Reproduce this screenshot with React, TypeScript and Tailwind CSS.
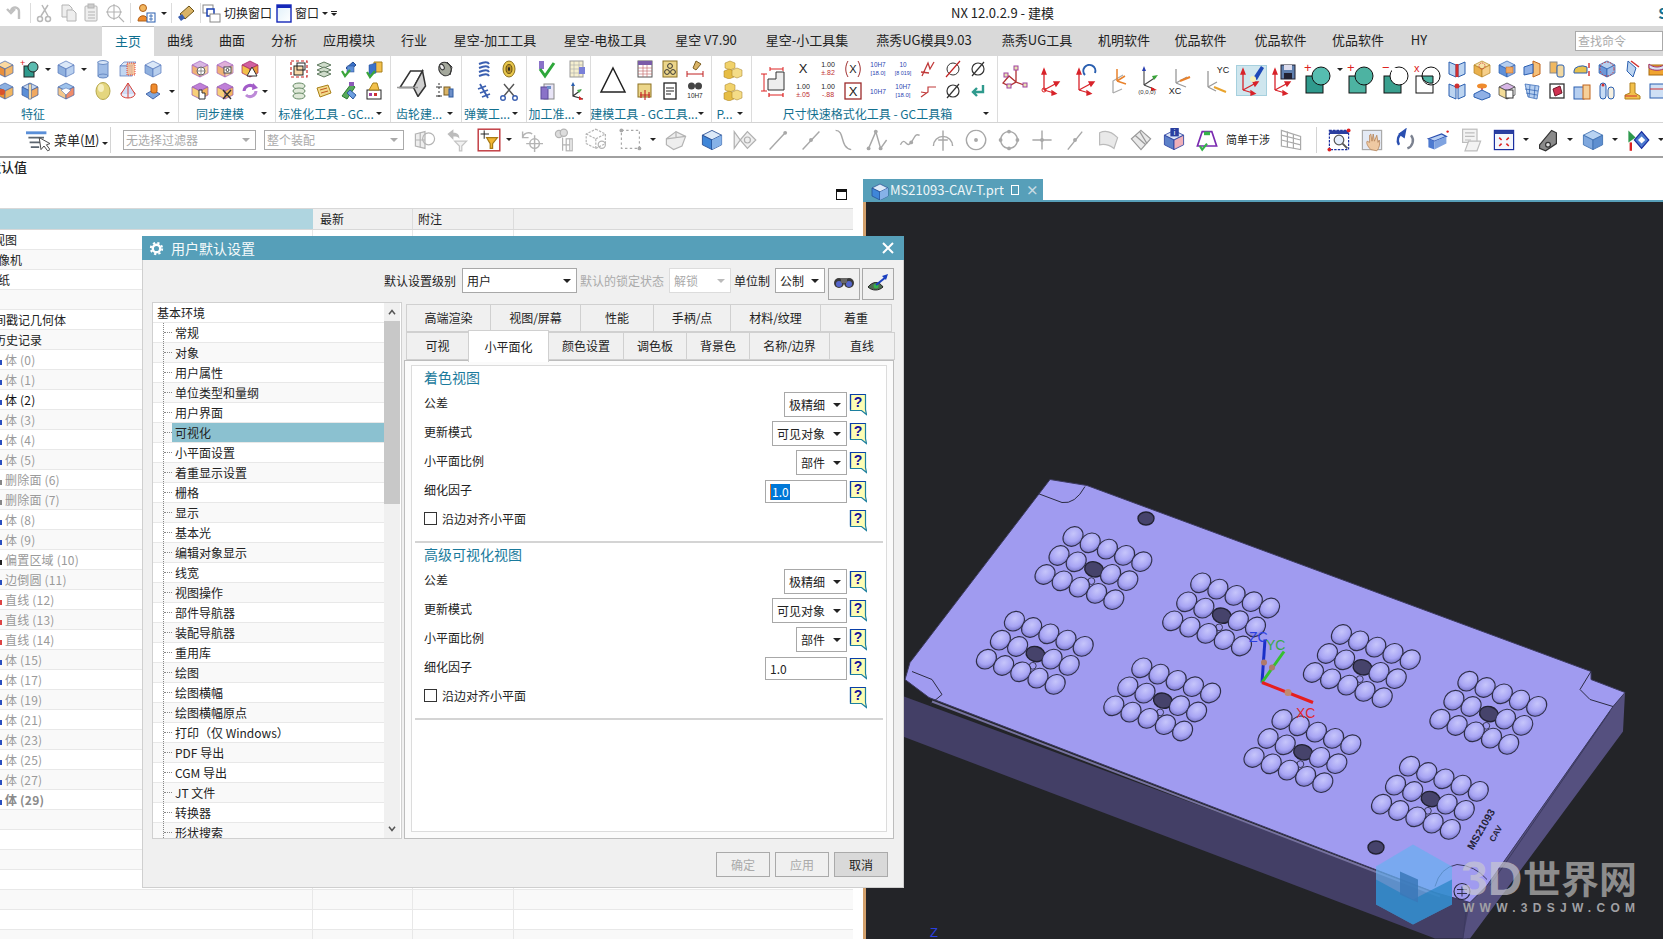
import React from "react";

const cube = (a: string, b: string, c: string, l = "#555") => (
  <g stroke={l} strokeWidth="0.7" strokeLinejoin="round">
    <polygon points="10,2 18,6 10,10 2,6" fill={a} />
    <polygon points="2,6 10,10 10,18 2,14" fill={b} />
    <polygon points="18,6 10,10 10,18 18,14" fill={c} />
  </g>
);
const csys = (extra?: React.ReactNode) => (
  <g>
    <g stroke="#d8232a" strokeWidth="1.3" fill="#d8232a">
      <line x1="6" y1="27" x2="6" y2="9" />
      <line x1="6" y1="27" x2="19" y2="20" />
      <line x1="6" y1="27" x2="16" y2="30" />
      <polygon points="6,6 4,11 8,11" />
      <polygon points="21,19 16,19 18,23" />
      <polygon points="18,30.5 14,28 14,32" />
    </g>
    {extra}
  </g>
);
const txt = (x: number, y: number, s: string, c = "#222", f = 6) => (
  <text x={x} y={y} fontSize={f} fill={c} textAnchor="middle" fontFamily="Liberation Sans, sans-serif">
    {s}
  </text>
);
const spring = (c: string) => (
  <g fill="none" stroke={c} strokeWidth="2">
    <path d="M5 5c5-2 9-2 10 0M5 9c5-2 9-2 10 0M5 13c5-2 9-2 10 0M5 17c5-2 9-2 10 0" />
  </g>
);
const gray = (d: string) => <path d={d} fill="none" stroke="#a8a8a8" strokeWidth="1.2" />;
const dot = (x: number, y: number, c = "#a8a8a8", r = 1.6) => <circle cx={x} cy={y} r={r} fill={c} />;

const art: Record<string, React.ReactNode> = {
  co: cube("#fbd9a0", "#e88f3c", "#f3b566", "#4466aa"),
  cb: cube("#dbe8f8", "#8fb0de", "#b8cfee", "#5577bb"),
  cg: cube("#eeeeee", "#c8c8c8", "#dddddd", "#aaaaaa"),
  tp: (
    <>
      <text x="0" y="7" fontSize="9" fill="#d22" fontFamily="Liberation Sans">+</text>
      <rect x="4" y="7" width="10" height="11" fill="#2f9a8d" stroke="#222" />
      <circle cx="13" cy="8" r="5" fill="#5bbcb0" stroke="#222" />
    </>
  ),
  cyl: (
    <>
      <rect x="5" y="3" width="10" height="14" fill="#9fbce6" stroke="#6a8cc4" />
      <ellipse cx="10" cy="3.5" rx="5" ry="2" fill="#d6e4f7" stroke="#6a8cc4" />
      <ellipse cx="10" cy="17" rx="5" ry="2" fill="#9fbce6" stroke="#6a8cc4" />
    </>
  ),
  boxr: (
    <>
      <polygon points="2,7 6,3 18,3 14,7" fill="#dce8f6" stroke="#5577bb" strokeWidth=".7" />
      <rect x="2" y="7" width="12" height="10" fill="#c2d6f0" stroke="#5577bb" strokeWidth=".7" />
      <rect x="9" y="4" width="8" height="12" fill="#f6b98a" fillOpacity=".8" stroke="#d22" strokeDasharray="1 1" strokeWidth=".8" />
    </>
  ),
  burst: (
    <>
      {cube("#8cb0e0", "#e9912f", "#f2b65f", "#4466aa")}
      <circle cx="7" cy="11" r="3" fill="#d9532c" />
    </>
  ),
  slice: (
    <>
      {cube("#c4d6f0", "#5c8fd6", "#f0a860", "#335599")}
      <rect x="8.5" y="3" width="3" height="15" fill="#f6d9a0" stroke="#335599" strokeWidth=".5" />
    </>
  ),
  open: (
    <>
      {cube("#9fc3ec", "#f4c88c", "#f08c6a", "#4466aa")}
      <polygon points="10,7 15,9 10,14 5,9" fill="#fff" stroke="#4466aa" strokeWidth=".5" />
    </>
  ),
  ball: (
    <>
      <ellipse cx="10" cy="10" rx="7" ry="8.5" fill="#e4d67e" stroke="#b7a84c" />
      <ellipse cx="8" cy="7" rx="3" ry="4" fill="#f6efc0" />
    </>
  ),
  cone: (
    <>
      <ellipse cx="10" cy="13" rx="7" ry="4" fill="#e8eefb" stroke="#d6433a" />
      <path d="M3 13 10 2 17 13" fill="#cfdcf5" stroke="#d6433a" />
      <line x1="10" y1="2" x2="10" y2="17" stroke="#d6433a" />
    </>
  ),
  stamp: (
    <>
      <polygon points="3,13 10,9 17,13 10,18" fill="#7fa6de" stroke="#4466aa" />
      <rect x="8" y="3" width="6" height="9" rx="2" fill="#ef8b2c" stroke="#b95d10" />
    </>
  ),
  hx: (
    <>
      {cube("#d8b6e2", "#f0b276", "#f6cf9a", "#a060c0")}
      <circle cx="11" cy="12" r="4" fill="#fff" stroke="#666" />
      <path d="M7 12h8M11 8v8" stroke="#666" strokeWidth=".7" />
    </>
  ),
  hx2: (
    <>
      {cube("#e0b0d8", "#f0b276", "#f6cf9a", "#a060c0")}
      <rect x="9" y="8" width="7" height="6" fill="#fff" stroke="#444" />
      <circle cx="12.5" cy="11" r="1.5" fill="none" stroke="#444" />
    </>
  ),
  hx3: (
    <>
      {cube("#d060a0", "#f2c04a", "#e89a3a", "#a02060")}
      <polygon points="12,8 17,17 7,17" fill="#fff" stroke="#333" />
    </>
  ),
  hx4: (
    <>
      {cube("#c080d8", "#f7cf7a", "#f2b65f", "#9050b0")}
      <path d="M9 9v9h6v-6h-3V9z" fill="#fff" stroke="#333" />
    </>
  ),
  hx5: (
    <>
      {cube("#c080d8", "#f7cf7a", "#f2b65f", "#9050b0")}
      <path d="M8 9l8 9M16 9l-8 9" stroke="#333" strokeWidth="1.4" />
    </>
  ),
  rot: (
    <g fill="none" stroke="#a25cc8" strokeWidth="3">
      <path d="M4 10a6 6 0 0 1 10-4" />
      <path d="M16 10a6 6 0 0 1-10 4" stroke="#bd8ad8" />
      <polygon points="13,2 18,7 12,9" fill="#a25cc8" stroke="none" />
    </g>
  ),
  fr: (
    <>
      <rect x="2" y="2" width="16" height="16" fill="none" stroke="#cc2222" strokeWidth="1.2" strokeDasharray="3 2" />
      <rect x="5" y="7" width="9" height="9" fill="#f7d7a8" stroke="#222" />
      <rect x="8" y="4" width="8" height="7" fill="none" stroke="#222" />
    </>
  ),
  stk: (
    <g stroke="#668a66" fill="#dfe8d8">
      <ellipse cx="10" cy="5" rx="6" ry="3" />
      <ellipse cx="10" cy="10" rx="6" ry="3" />
      <ellipse cx="10" cy="15" rx="6" ry="3" />
    </g>
  ),
  bar: (
    <>
      <polygon points="7,9 14,3 17,6 10,12" fill="#3b72c9" stroke="#234a90" />
      <rect x="8" y="7" width="7" height="6" fill="#5f8fd8" stroke="#234a90" strokeWidth=".5" />
      <path d="M3 12l3 5 5-6" fill="none" stroke="#3aa53a" strokeWidth="2.2" />
    </>
  ),
  by: (
    <>
      <polygon points="10,3 18,3 18,13 10,13" fill="#f3c04d" stroke="#a98018" />
      <polygon points="5,6 12,4 12,14 5,16" fill="#3b72c9" stroke="#234a90" strokeWidth=".5" />
      <path d="M3 13l3 5 5-6" fill="none" stroke="#3aa53a" strokeWidth="2.2" />
    </>
  ),
  stk2: (
    <g stroke="#5f7a5f" fill="#cfdccb">
      <polygon points="3,6 10,3 17,6 10,9" />
      <polygon points="3,11 10,8 17,11 10,14" />
      <polygon points="3,15 10,12 17,15 10,18" />
    </g>
  ),
  note: (
    <>
      <polygon points="3,7 14,4 17,12 6,16" fill="#f3d98a" stroke="#a98018" />
      <path d="M6 9l7-2M7 12l7-2" stroke="#c05a20" />
    </>
  ),
  tool: (
    <>
      <polygon points="3,15 12,3 16,6 8,18" fill="#58a95c" stroke="#2a7a30" />
      <polygon points="11,9 17,14 14,18 8,12" fill="#6d9fe0" stroke="#2e5aa0" />
      <rect x="10" y="1" width="5" height="4" fill="#8c5ab8" />
    </>
  ),
  chart: (
    <>
      <rect x="3" y="9" width="14" height="9" fill="#fff" stroke="#222" />
      <rect x="5" y="12" width="3" height="3" fill="#a040a0" />
      <rect x="10" y="12" width="3" height="3" fill="#d03030" />
      <polygon points="5,9 9,2 13,2 15,9" fill="#f2c04a" stroke="#a98018" />
    </>
  ),
  ang: (
    <>
      <polygon points="2,15 9,4 17,4 11,15" fill="#fff" stroke="#333" />
      <polygon points="11,15 17,4 19,14 14,21" fill="#d0d0d0" stroke="#333" />
      <line x1="0" y1="15" x2="14" y2="15" stroke="#999" />
    </>
  ),
  roll: (
    <>
      <ellipse cx="10" cy="10" rx="6" ry="7" fill="#a4a89c" stroke="#333" transform="rotate(-30 10 10)" />
      <ellipse cx="7" cy="8" rx="2" ry="3" fill="#eee" stroke="#333" transform="rotate(-30 7 8)" />
      <path d="M12 3l5 5-2 8" fill="none" stroke="#333" />
    </>
  ),
  line: (
    <>
      <path d="M4 2v16" stroke="#333" strokeDasharray="2 2" />
      <path d="M1 6h6M1 15h6" stroke="#333" />
      <rect x="9" y="6" width="6" height="8" fill="#d9b366" stroke="#7b5e22" />
      <rect x="14" y="8" width="4" height="8" fill="#6d8fc8" stroke="#2e5aa0" />
    </>
  ),
  spr: spring("#3a5fb0"),
  ryl: (
    <>
      <ellipse cx="10" cy="10" rx="6" ry="8" fill="#e9c84c" stroke="#8c7120" />
      <ellipse cx="10" cy="10" rx="3" ry="4.5" fill="#b8912a" stroke="#6b5316" />
      <ellipse cx="10" cy="10" rx="1" ry="2" fill="#222" />
    </>
  ),
  spr2: <path d="M6 3l8 14M4 8l8-3M6 12l8-3M8 16l8-3" stroke="#3a5fb0" strokeWidth="1.8" fill="none" />,
  sci: (
    <g fill="none" stroke="#555" strokeWidth="1.4">
      <path d="M5 3l10 12M15 3L5 15" />
      <circle cx="4" cy="17" r="2.3" stroke="#3a5fb0" />
      <circle cx="16" cy="17" r="2.3" stroke="#3a5fb0" />
    </g>
  ),
  chk: (
    <>
      <rect x="2" y="2" width="5" height="8" fill="#8a72c8" />
      <path d="M3 10l5 7 9-13" fill="none" stroke="#2da73a" strokeWidth="3" />
    </>
  ),
  grd: (
    <>
      <rect x="3" y="2" width="13" height="16" fill="#f6efcf" stroke="#999" />
      <path d="M3 6h13M3 10h13M3 14h13M7 2v16M12 2v16" stroke="#aaa" strokeWidth=".6" />
      <rect x="12" y="8" width="6" height="7" fill="#7a80d8" />
    </>
  ),
  doc: (
    <>
      <rect x="7" y="3" width="10" height="15" fill="#e8e4f6" stroke="#888" />
      <rect x="4" y="6" width="7" height="12" fill="#8a72c8" stroke="#5a4a98" />
      <rect x="10" y="5" width="4" height="3" fill="#6d8fc8" />
    </>
  ),
  cs2: (
    <>
      <path d="M6 3v12l10 3M6 15l8-6" fill="none" stroke="#333" strokeWidth="1.2" />
      <polygon points="6,1 4,5 8,5" fill="#2a5fb0" />
      <polygon points="16,18.5 12,15 12,19" fill="#d22" />
      <polygon points="15,8 10,9 12,12" fill="#4caf50" />
    </>
  ),
  tri: <polygon points="10,2 18,18 2,18" fill="#fff" stroke="#222" strokeWidth="1" />,
  tbl: (
    <>
      <rect x="3" y="2" width="14" height="16" fill="#fff" stroke="#555" />
      <rect x="3" y="2" width="14" height="4" fill="#7a5ca8" />
      <path d="M3 9h14M3 12h14M3 15h14M8 6v12M12 6v12" stroke="#c06060" strokeWidth=".6" />
    </>
  ),
  yc: (
    <>
      <rect x="3" y="2" width="14" height="16" fill="#ecd68a" stroke="#8c7120" />
      <circle cx="7" cy="13" r="2.4" fill="none" stroke="#333" />
      <circle cx="13" cy="13" r="2.4" fill="none" stroke="#333" />
      <circle cx="10" cy="7" r="2.4" fill="none" stroke="#333" />
    </>
  ),
  brush: (
    <>
      <polygon points="11,2 16,5 11,11 8,9" fill="#d9b366" stroke="#7b5e22" />
      <path d="M2 15h16M2 12v6M18 12v6" stroke="#c02020" />
    </>
  ),
  yplus: (
    <>
      <rect x="3" y="3" width="13" height="13" fill="#ecd68a" stroke="#8c7120" />
      <path d="M10 9v10M5 14h10M6 11v6M14 11v6" stroke="#c02020" strokeWidth="1.1" />
    </>
  ),
  lines: (
    <>
      <rect x="4" y="2" width="12" height="16" fill="#fff" stroke="#222" strokeWidth="1.3" />
      <path d="M6 7h8M6 10h8M6 13h5" stroke="#222" />
    </>
  ),
  h7: (
    <>
      <circle cx="6.5" cy="5" r="3.5" fill="#444" />
      <circle cx="13.5" cy="5" r="3.5" fill="#444" />
      {txt(10, 17, "10H7", "#222", 6.4)}
    </>
  ),
  yb: (
    <g stroke="#a07a20" strokeWidth=".5">
      <polygon points="7,2 12,4 12,9 7,11 2,9 2,4" fill="#f1d26b" />
      <polygon points="6,10 11,12 11,18 6,20 1,18 1,12" fill="#e6bd45" />
      <polygon points="14,9 19,11 19,17 14,19 9,17 9,11" fill="#f4dc87" />
    </g>
  ),
  dim: (
    <svg viewBox="0 0 30 34">
      <path d="M8 27V16h8V9h8v18z" fill="#eee" stroke="#333" />
      <path d="M4 11v17M1 11h6M1 28h6M10 6h13M10 4v4M23 4v4" stroke="#d22" fill="none" />
      <path d="M9 32h14M9 30v4M23 30v4" stroke="#d22" strokeWidth="1.2" />
    </svg>
  ),
  x1: <>{txt(10, 14, "X", "#222", 13)}</>,
  d1: (
    <>
      {txt(10, 8, "1.00", "#222", 7)}
      {txt(10, 16, "-.88", "#c03030", 7)}
    </>
  ),
  d2: (
    <>
      {txt(10, 8, "1.00", "#222", 7)}
      {txt(10, 16, "±.05", "#c03030", 7)}
    </>
  ),
  d3: (
    <>
      {txt(10, 8, "1.00", "#222", 7)}
      {txt(10, 16, "±.82", "#c03030", 7)}
    </>
  ),
  xb: (
    <>
      <rect x="2" y="2" width="16" height="16" fill="#fff" stroke="#9c2a2a" strokeWidth="1.3" />
      {txt(10, 15, "X", "#222", 13)}
    </>
  ),
  xp: (
    <>
      <path d="M5 2c-3 5-3 11 0 16M15 2c3 5 3 11 0 16" fill="none" stroke="#a03030" />
      {txt(10, 14, "X", "#222", 11)}
    </>
  ),
  h71: (
    <>
      {txt(10, 8, "10H7", "#2a3fb0", 6.4)}
      {txt(10, 16, "[18.0]", "#2a3fb0", 6)}
    </>
  ),
  h72: <>{txt(10, 13, "10H7", "#2a3fb0", 6.6)}</>,
  h73: (
    <>
      {txt(10, 8, "10", "#2a3fb0", 6.4)}
      {txt(10, 16, "[8 019]", "#2a3fb0", 5.4)}
    </>
  ),
  dia: (
    <g fill="none" stroke="#333">
      <circle cx="10" cy="10" r="6" />
      <path d="M3 18L17 2" stroke="#c02020" strokeWidth="1.2" />
    </g>
  ),
  dia2: (
    <g fill="none" stroke="#333" strokeWidth="1.2">
      <circle cx="10" cy="10" r="6" />
      <path d="M4 17L16 3" />
    </g>
  ),
  sl: <path d="M4 17L10 4l2 6 4-7M3 13l8 1" fill="none" stroke="#c03a3a" strokeWidth="1.3" />,
  sl2: <path d="M3 16l7-5v-5h8M3 11l6 1" fill="none" stroke="#c03a3a" strokeWidth="1.2" />,
  ret: <path d="M15 4v7H6m3-4l-4 4 4 4" fill="none" stroke="#2f9a8d" strokeWidth="2.4" />,
  c1: (
    <svg viewBox="0 0 30 34">
      <g fill="none" stroke="#b03030" strokeWidth="1.3">
        <path d="M14 5v14l-7 4-6-3 6-7 7 6 8 3" />
      </g>
      <g fill="#e9e3b0" stroke="#a040a0" strokeWidth="1">
        <rect x="12" y="3" width="4" height="4" />
        <rect x="5" y="21" width="4" height="4" />
        <rect x="21" y="20" width="4" height="4" />
        <rect x="2" y="10" width="4" height="4" />
      </g>
    </svg>
  ),
  c2: <svg viewBox="0 0 30 34">{csys()}<circle cx="6" cy="27" r="2" fill="none" stroke="#d22" /></svg>,
  c3: (
    <svg viewBox="0 0 30 34">
      {csys(<path d="M12 12a6 6 0 1 1 10-2" fill="none" stroke="#2a5fb0" strokeWidth="2" />)}
    </svg>
  ),
  c4: (
    <svg viewBox="0 0 30 34">
      <path d="M8 30V18l10-6M8 30l9-4" fill="none" stroke="#aaa" strokeWidth="1.3" />
      <path d="M12 18V6M12 18l8-5M12 18l9 3" fill="none" stroke="#e9822c" strokeWidth="1.5" />
    </svg>
  ),
  c5: (
    <svg viewBox="0 0 30 34">
      <path d="M10 22V6M10 22l12-8M10 22l10 4" fill="none" stroke="#444" strokeWidth="1.1" />
      <polygon points="10,3 8,8 12,8" fill="#2a3fb0" />
      <polygon points="24,12 18,13 20,17" fill="#3aa53a" />
      <polygon points="23,27 17,24 17,28" fill="#d22" />
      {txt(13, 31, "(0,0,0)", "#333", 6)}
    </svg>
  ),
  c6: (
    <svg viewBox="0 0 30 34">
      <path d="M10 20V6M10 20l11-6M10 20l10 4" fill="none" stroke="#999" strokeWidth="1.3" />
      <path d="M14 18l10-4" stroke="#e9822c" strokeWidth="2" />
      {txt(9, 31, "XC", "#222", 9)}
    </svg>
  ),
  c7: (
    <svg viewBox="0 0 30 34">
      <path d="M6 24V8M6 24l9-5M6 24l8 4" fill="none" stroke="#999" strokeWidth="1.3" />
      <path d="M12 24l12 5" stroke="#e9a32c" strokeWidth="2" />
      {txt(21, 10, "YC", "#222", 9)}
    </svg>
  ),
  c8: (
    <svg viewBox="0 0 30 34">
      {csys(
        <>
          <polygon points="16,15 24,3 27,5 20,17" fill="#1f49b8" />
          <circle cx="16" cy="16" r="3" fill="#f6f0b8" />
        </>,
      )}
    </svg>
  ),
  c9: (
    <svg viewBox="0 0 30 34">
      {csys(
        <>
          <rect x="12" y="2" width="14" height="14" fill="#5f7fae" stroke="#223" />
          <rect x="15" y="2" width="8" height="5" fill="#dde" />
          <rect x="15" y="10" width="8" height="6" fill="#223" />
        </>,
      )}
    </svg>
  ),
  q1: (
    <svg viewBox="0 0 30 34">
      <rect x="3" y="13" width="17" height="17" fill="#2f9a8d" stroke="#111" />
      <circle cx="18" cy="13" r="9" fill="#56bdb0" stroke="#111" />
      <text x="1" y="9" fontSize="13" fill="#d22" fontFamily="Liberation Sans">+</text>
    </svg>
  ),
  q2: (
    <svg viewBox="0 0 30 34">
      <rect x="3" y="13" width="17" height="17" fill="#4db3a2" stroke="#111" />
      <circle cx="18" cy="13" r="9" fill="#4db3a2" stroke="#111" />
      <text x="1" y="9" fontSize="13" fill="#d22" fontFamily="Liberation Sans">+</text>
    </svg>
  ),
  q3: (
    <svg viewBox="0 0 30 34">
      <rect x="3" y="13" width="17" height="17" fill="#3aa08f" stroke="#111" />
      <circle cx="18" cy="13" r="9" fill="#fff" stroke="#111" />
      <rect x="11" y="5" width="9" height="8" fill="#fff" />
      <text x="1" y="9" fontSize="13" fill="#d22" fontFamily="Liberation Sans">−</text>
    </svg>
  ),
  q4: (
    <svg viewBox="0 0 30 34">
      <rect x="3" y="13" width="17" height="17" fill="#fff" stroke="#111" />
      <circle cx="18" cy="13" r="9" fill="#fff" stroke="#111" />
      <path d="M9 13h11v7a9 9 0 0 1-11-7z" fill="#4db3a2" stroke="#111" />
      <text x="1" y="9" fontSize="11" fill="#d22" fontFamily="Liberation Sans">x</text>
    </svg>
  ),
  book: (
    <>
      <polygon points="2,3 9,6 9,18 2,15" fill="#bcd4f0" stroke="#2a5fb0" />
      <polygon points="18,3 11,6 11,18 18,15" fill="#bcd4f0" stroke="#2a5fb0" />
      <rect x="8.5" y="5" width="3" height="13" fill="#d03030" />
    </>
  ),
  y1: (
    <>
      {cube("#f6e3a8", "#e9b04c", "#f6cf8a", "#b08020")}
      <circle cx="10" cy="7" r="3" fill="none" stroke="#d03030" strokeDasharray="1 1" />
    </>
  ),
  f1: (
    <>
      {cube("#b6cff0", "#5e8fd8", "#8fb0e6", "#2a5fb0")}
      <rect x="9" y="8" width="7" height="6" fill="#f0a860" stroke="#c0641c" strokeWidth=".5" />
    </>
  ),
  f2: (
    <>
      <polygon points="11,2 18,5 18,15 11,18" fill="#f6c078" stroke="#c0641c" />
      <polygon points="2,8 11,5 11,14 2,16" fill="#8fb0e6" stroke="#2a5fb0" />
    </>
  ),
  f3: (
    <>
      <rect x="3" y="3" width="7" height="11" fill="#f0b860" stroke="#888" />
      <rect x="10" y="6" width="7" height="12" rx="2" fill="#f2d8a0" stroke="#2a5fb0" />
    </>
  ),
  f4: (
    <>
      <path d="M2 12a8 5 0 0 1 13-4v6H2z" fill="#e7c24d" stroke="#2a5fb0" />
      <path d="M17 4v5M17 12v5" stroke="#d03030" strokeWidth="1.4" />
    </>
  ),
  f5: (
    <>
      {cube("#b8cfee", "#6d97d8", "#9dbbe8", "#2a5fb0")}
      <circle cx="10" cy="10" r="7" fill="none" stroke="#d03030" strokeDasharray="1.5 1.5" />
    </>
  ),
  f6: (
    <>
      <polygon points="6,2 14,9 11,18 5,12" fill="#bcd4f0" stroke="#2a5fb0" />
      <path d="M9 2l8 6" stroke="#d03030" strokeWidth="1.5" />
    </>
  ),
  f7: (
    <>
      <rect x="2" y="6" width="16" height="10" fill="#f0a430" stroke="#a86a10" />
      <path d="M2 5c4 4 12 4 16 0v4c-4 3-12 3-16 0z" fill="#d9e2f4" stroke="#a03070" />
    </>
  ),
  g1: (
    <>
      <polygon points="2,3 9,6 9,18 2,15" fill="#bcd4f0" stroke="#2a5fb0" />
      <polygon points="18,3 11,6 11,18 18,15" fill="#bcd4f0" stroke="#2a5fb0" />
      <circle cx="10" cy="5" r="2.5" fill="#d03030" />
    </>
  ),
  g2: (
    <>
      <ellipse cx="10" cy="5" rx="5" ry="2.5" fill="#ef8b2c" />
      <path d="M10 7v5" stroke="#d03030" strokeWidth="1.3" />
      <polygon points="2,13 10,9 18,13 18,16 10,19 2,16" fill="#8fb0e6" stroke="#2a5fb0" />
    </>
  ),
  g3: (
    <>
      {cube("#d7b6e6", "#f3dc98", "#fff", "#333")}
      <rect x="9" y="9" width="7" height="8" fill="#fff" stroke="#333" />
    </>
  ),
  g4: (
    <g stroke="#2a5fb0" strokeWidth=".7">
      <polygon points="3,3 17,5 15,18 6,16" fill="#b6cff0" />
      <path d="M3 8l13 2M4 12l11 2M8 4l-1 12M13 5l-1 12" fill="none" />
    </g>
  ),
  g5: (
    <>
      <rect x="3" y="3" width="14" height="14" fill="#fff" stroke="#333" strokeWidth="1.3" />
      <polygon points="6,8 13,5 15,12 8,15" fill="#d03050" stroke="#701828" />
    </>
  ),
  g6: (
    <>
      <rect x="2" y="6" width="10" height="12" fill="#b6cff0" stroke="#2a5fb0" />
      <rect x="11" y="4" width="7" height="14" fill="#f6d09a" stroke="#c0641c" />
    </>
  ),
  g7: (
    <>
      <rect x="3" y="2" width="6" height="16" rx="3" fill="#c8dcf4" stroke="#2a5fb0" />
      <rect x="11" y="6" width="6" height="12" rx="3" fill="#f6f0e0" stroke="#2a5fb0" />
      <circle cx="6" cy="4" r="1.5" fill="#d03030" />
    </>
  ),
  g8: (
    <>
      <polygon points="8,2 13,2 13,12 18,15 18,18 3,18 3,14 8,12" fill="#f2c04a" stroke="#b08020" />
      <path d="M3 15h12" stroke="#d03030" />
    </>
  ),
  g9: (
    <>
      <rect x="3" y="3" width="14" height="14" fill="#cfe0f5" stroke="#2a5fb0" />
      <path d="M3 8h14" stroke="#d03030" />
    </>
  ),
  undo: <path d="M15 16V9a4 4 0 0 0-8-1M3 6l4 4 4-4" fill="none" stroke="#c0c0c0" strokeWidth="2.4" />,
  scis: (
    <g fill="none" stroke="#b8b8b8" strokeWidth="1.5">
      <path d="M14 2L7 13M8 2l6 11" />
      <circle cx="6" cy="16" r="2.5" />
      <circle cx="14" cy="16" r="2.5" />
    </g>
  ),
  copy: (
    <g fill="#eee" stroke="#b4b4b4">
      <path d="M3 2h7l3 3v9H3z" />
      <path d="M8 7h6l3 3v8H8z" />
    </g>
  ),
  paste: (
    <g fill="#eee" stroke="#b4b4b4">
      <rect x="3" y="3" width="12" height="15" rx="1" />
      <rect x="6" y="1" width="6" height="4" fill="#ccc" />
      <path d="M6 9h7M6 12h7M6 15h7" />
    </g>
  ),
  gl: (
    <g fill="none" stroke="#b4b4b4" strokeWidth="1.1">
      <circle cx="9" cy="9" r="6.5" />
      <path d="M9 1v16M1 9h16M14 14l5 5" />
    </g>
  ),
  per: (
    <>
      <circle cx="7" cy="5" r="3.5" fill="#f2b65f" stroke="#b06018" />
      <path d="M2 18c0-7 10-7 10 0z" fill="#ef8b2c" stroke="#b06018" />
      <rect x="11" y="10" width="8" height="9" fill="#fff" stroke="#2a5fb0" />
      <path d="M13 13h4M13 16h4M15 11v7" stroke="#2a5fb0" strokeWidth=".8" />
    </>
  ),
  pen: (
    <>
      <polygon points="4,11 13,3 18,8 9,16" fill="#d9b366" stroke="#6b5316" />
      <polygon points="2,14 6,11 9,15 5,18" fill="#3a5fb0" />
    </>
  ),
  win: (
    <>
      <rect x="1" y="2" width="10" height="8" fill="#fff" stroke="#888" />
      <rect x="5" y="6" width="7" height="7" fill="#fff" stroke="#1a3fb0" strokeWidth="1.5" />
      <rect x="8" y="11" width="10" height="8" fill="#fff" stroke="#888" />
    </>
  ),
  win2: (
    <>
      <defs>
        <linearGradient id="wg" x1="0" x2="1" y1="0" y2="1">
          <stop offset="0" stopColor="#dff0fa" />
          <stop offset="1" stopColor="#fff" />
        </linearGradient>
      </defs>
      <rect x="3" y="2" width="14" height="17" fill="url(#wg)" stroke="#1427b8" strokeWidth="1.4" />
      <rect x="3" y="2" width="14" height="3" fill="#1427b8" />
    </>
  ),
  menu: (
    <>
      <path d="M0 4h17" stroke="#5a8fd8" strokeWidth="2.4" />
      <path d="M2 8h13M3 12h9M4 16h7" stroke="#5c6670" strokeWidth="1.4" />
      <path d="M11 8l1.5 10 2.5-3 3 4 2-1-3-4 3-1z" fill="#fff" stroke="#444" strokeWidth=".8" />
    </>
  ),
  s1: (
    <g fill="#eee" stroke="#b4b4b4">
      <polygon points="2,5 10,3 10,17 2,15" />
      <circle cx="13" cy="9" r="5" fill="none" />
      <path d="M2 10h8M6 4v12" />
    </g>
  ),
  s2: (
    <>
      <path d="M2 5l5-4v3c4 0 5 2 5 5-1-2-3-2-5-2v3z" fill="#bcbcbc" />
      <polygon points="8,11 18,11 14,15 14,19 12,19 12,15" fill="#f1f1f1" stroke="#c4c4c4" />
    </>
  ),
  s3: (
    <>
      <rect x="1" y="1" width="18" height="18" fill="#fff" stroke="#c0393f" strokeWidth="1.2" />
      <polygon points="8,8 17,8 13,13 13,17 11,17 11,13" fill="#f2b632" stroke="#a87a14" />
      <path d="M6 2v7M3 5h7" stroke="#222" strokeWidth=".8" />
    </>
  ),
  s4: (
    <g fill="none" stroke="#b4b4b4" strokeWidth="1.2">
      <path d="M3 8a5 5 0 0 1 8-3M3 3v5h5" />
      <circle cx="13" cy="13" r="4" />
      <path d="M13 6v14M6 13h14" />
    </g>
  ),
  s5: (
    <g stroke="#b4b4b4" fill="#ddd">
      <circle cx="5" cy="5" r="3" />
      <circle cx="9" cy="4" r="3" />
      <path d="M8 8v11M14 9v10M8 14h6" fill="none" />
      <rect x="11" y="9" width="5" height="10" fill="none" />
    </g>
  ),
  s6: (
    <g fill="none" stroke="#b4b4b4" strokeDasharray="2 1">
      <polygon points="9,1 17,5 17,13 9,17 1,13 1,5" />
      <path d="M9 9v8M1 5l8 4 8-4" />
      <circle cx="14" cy="14" r="3" strokeDasharray="none" />
    </g>
  ),
  s7: (
    <>
      <rect x="2" y="2" width="15" height="15" fill="none" stroke="#a8a8a8" strokeDasharray="2 2" />
      <circle cx="17" cy="17" r="1.6" fill="#a8a8a8" />
      <circle cx="2" cy="2" r="1.6" fill="#a8a8a8" />
    </>
  ),
  s8: (
    <>
      <polygon points="2,9 10,3 18,7 15,15 8,18 2,14" fill="#eeeeee" stroke="#b4b4b4" />
      <path d="M10 3v5l8-1M10 8l-8 1" stroke="#b4b4b4" fill="none" />
    </>
  ),
  s9: <>{cube("#dce9f8", "#3f86d8", "#a9c9ef", "#234a90")}<polygon points="10,10 18,6 18,14 10,18" fill="#86b2e8" /></>,
  s10: (
    <g fill="none" stroke="#b0b0b0">
      <path d="M1 3l5 7-5 7zM6 10l6-7 7 7-7 7z" fill="#eee" />
      <circle cx="12" cy="10" r="2.5" />
    </g>
  ),
  s11: <>{gray("M3 18L16 4")}{dot(16, 4)}</>,
  s12: <>{gray("M3 18L17 3")}{dot(10, 10)}</>,
  s13: gray("M3 2c8 0 3 14 13 16"),
  s14: (
    <>
      {gray("M3 17L9 3l4 14 5-7")}
      {dot(9, 3)}
      {dot(3, 17)}
      {dot(13, 17)}
    </>
  ),
  s15: (
    <>
      {gray("M2 14c4-8 5 4 9-2s3-7 7-6")}
      {dot(11, 12)}
    </>
  ),
  s16: <>{gray("M2 15a8 8 0 0 1 16 0M10 2v17M6 10h8")}</>,
  s17: (
    <>
      {gray("M10 2a8 8 0 1 0 .1 0")}
      {dot(10, 10)}
    </>
  ),
  s18: (
    <>
      {gray("M10 3a7 7 0 1 0 .1 0")}
      {dot(10, 3)}
      {dot(3, 10)}
      {dot(17, 10)}
      {dot(10, 17)}
    </>
  ),
  s19: <>{gray("M10 2v16M2 10h16")}{dot(10, 10)}</>,
  s20: <>{gray("M4 18L16 3")}{dot(10, 10)}</>,
  s21: <path d="M3 4c6-3 11 0 15 4l-3 9c-4-3-7-4-12-3z" fill="#e9e9e9" stroke="#bbb" />,
  s22: (
    <g stroke="#999" fill="#e9e9e9">
      <polygon points="10,2 18,9 10,18 2,9" />
      <path d="M5 6l9 8M9 3l6 10" fill="none" />
    </g>
  ),
  s23: (
    <>
      {cube("#dce4f5", "#5c80c8", "#f0b0b8", "#2a3fa0")}
      <rect x="7" y="0" width="7" height="7" fill="#2a3fa0" />
      <text x="10.5" y="6" fontSize="6" fill="#fff" textAnchor="middle">i</text>
    </>
  ),
  s24: (
    <>
      <polygon points="6,3 14,3 18,15 2,15" fill="#fff" stroke="#7a2ab0" strokeWidth="1.4" />
      <rect x="7.5" y="3" width="5" height="3" fill="#36b24a" />
      <path d="M4 15l2 3 4-5" stroke="#36b24a" strokeWidth="1.8" fill="none" />
    </>
  ),
  s25: (
    <g stroke="#aaa" fill="none">
      <polygon points="2,2 18,7 18,18 2,15" />
      <path d="M2 6l16 4M2 10l16 4M7 3v13M12 5v12" />
    </g>
  ),
  t1: (
    <>
      <rect x="2" y="2" width="16" height="16" fill="#fff" stroke="#1a2fa0" strokeDasharray="2 1" />
      <rect x="2" y="2" width="16" height="3" fill="#2a3fa0" />
      <circle cx="10" cy="10" r="4" fill="#e5eefb" stroke="#555" />
      <path d="M13 13l4 4" stroke="#555" strokeWidth="1.6" />
      {dot(2, 18, "#d22")}
      {dot(18, 2, "#d22")}
    </>
  ),
  t2: (
    <>
      <rect x="2" y="2" width="16" height="16" fill="#e4eaf5" stroke="#aaa" />
      <path d="M9 18c-3-3-4-6-3-7l2 1V6l1-1 1 6 1-6 1 6 2-5 1 6 1-2c1 3 0 7-2 9z" fill="#efc9a2" stroke="#b07a4c" strokeWidth=".6" />
    </>
  ),
  t3: (
    <g fill="none" stroke="#2a4fb0" strokeWidth="2">
      <path d="M5 14a7 7 0 0 1 3-10" />
      <path d="M15 6a7 7 0 0 1-3 11" stroke="#7c8290" />
      <polygon points="10,2 6,5 9,7" fill="#2a4fb0" />
    </g>
  ),
  t4: (
    <>
      <polygon points="2,9 13,5 17,7 7,11" fill="#b8cff2" stroke="#2a4fb0" />
      <polygon points="2,9 7,11 7,18 2,16" fill="#4d7ad0" />
      <polygon points="7,11 17,7 17,13 7,18" fill="#7fa3e0" />
      {dot(18, 3, "#d22", 1)}
    </>
  ),
  t5: (
    <g fill="#f3f3f3" stroke="#bdbdbd">
      <rect x="3" y="1" width="12" height="11" />
      <path d="M5 4h8M5 7h8M5 10h5" />
      <polygon points="8,11 18,11 15,19 5,19" />
    </g>
  ),
  t6: (
    <>
      <rect x="2" y="2" width="16" height="16" fill="#f4f7fc" stroke="#1a2fa0" />
      <rect x="2" y="2" width="16" height="3" fill="#2a3fa0" />
      <path d="M6 8l2 2M14 8l-2 2M6 15l2-2M14 15l-2-2" stroke="#d22" strokeWidth="1.3" />
    </>
  ),
  t7: (
    <>
      <polygon points="3,14 13,2 17,4 17,13 8,19 3,17" fill="#8a8a8a" stroke="#333" />
      <circle cx="10" cy="14" r="2" fill="#ddd" stroke="#333" />
    </>
  ),
  t8: <>{cube("#b8d3f2", "#7fa8de", "#5e8fd0", "#3d6fb0")}</>,
  t9: (
    <>
      <polygon points="2,2 8,8 2,12" fill="#2f9a4e" />
      <path d="M4 12v7" stroke="#d22" strokeWidth="2" />
      <polygon points="13,3 19,10 13,17 7,10" fill="#4d7ad0" stroke="#1a2fa0" />
      <polygon points="13,7 16,10 13,13 10,10" fill="#fff" />
    </>
  ),
};

const Ic = ({ k, big, lg }: { k: string; big?: boolean; lg?: boolean }) => (
  <svg
    viewBox="0 0 20 20"
    className={big ? "w-[30px] h-[34px] shrink-0" : lg ? "w-[24px] h-[24px] shrink-0" : "w-[20px] h-[20px] shrink-0"}
  >
    {art[k]}
  </svg>
);
const Tall = ({ k }: { k: string }) => <span className="block w-[30px] h-[34px] shrink-0">{art[k]}</span>;

const Tri = ({ c = "border-t-[#222]" }: { c?: string }) => (
  <span className={`inline-block w-0 h-0 border-x-[3px] border-t-[3px] border-x-transparent shrink-0 ${c}`} />
);

const Col = ({ w, i }: { w: string; i: string[] }) => (
  <div className={`${w} shrink-0 flex flex-col items-center`}>
    {i.map((k, n) =>
      k === "" ? (
        <div key={n} className="h-[22px]" />
      ) : k === "^" ? (
        <div key={n} className="h-[22px] flex items-center"><Tri /></div>
      ) : (
        <div key={n} className="h-[22px] flex items-center justify-center"><Ic k={k} /></div>
      ),
    )}
  </div>
);
const TallCol = ({ w, k }: { w: string; k: string }) => (
  <div className={`${w} shrink-0 flex items-center justify-center h-[44px]`}><Tall k={k} /></div>
);
const BigCol = ({ w, k }: { w: string; k: string }) => (
  <div className={`${w} shrink-0 flex items-center justify-center h-[44px]`}><Ic k={k} big /></div>
);

const Group = ({ w, pl, label, children, last, left }: { w: string; pl?: string; label?: string; children: React.ReactNode; last?: boolean; left?: string }) => (
  <div className={`${w} shrink-0 flex flex-col pt-[2px] ${last ? "" : "border-r border-[#dcdcdc]"}`}>
    <div className={`h-[44px] flex ${pl ?? ""}`}>{children}</div>
    {label !== undefined && (
      <div className="mt-[3px] h-[17px] flex items-center justify-center relative text-[12px] text-[#12708f] whitespace-nowrap pr-[8px]">
        <span className={`flex-1 leading-none ${left ?? "text-center"}`}>{label}</span>
        <Tri />
      </div>
    )}
  </div>
);

const tabs: [string, string][] = [
  ["主页", "w-[52px]"], ["曲线", "w-[52px]"], ["曲面", "w-[52px]"], ["分析", "w-[52px]"], ["应用模块", "w-[78px]"], ["行业", "w-[52px]"],
  ["星空-加工工具", "w-[110px]"], ["星空-电极工具", "w-[110px]"], ["星空 V7.90", "w-[92px]"], ["星空-小工具集", "w-[110px]"],
  ["燕秀UG模具9.03", "w-[124px]"], ["燕秀UG工具", "w-[102px]"], ["机明软件", "w-[72px]"], ["优品软件", "w-[81px]"], ["优品软件", "w-[79px]"], ["优品软件", "w-[76px]"], ["HY", "w-[46px]"],
];

const leftRows: [string, string, string][] = [
  ["模型视图", "-ml-[31px] text-[#222]", ""],
  ["摄像机", "-ml-[14px] text-[#222]", ""],
  ["图纸", "-ml-[14px] text-[#222]", ""],
  ["", "", ""],
  ["时间戳记几何体", "-ml-[18px] text-[#222]", ""],
  ["历史记录", "-ml-[6px] text-[#222]", ""],
  ["体 (0)", "ml-[3px] text-[#9a9a9a] tracking-[0.2px]", "bg-[#2a4fc0]"],
  ["体 (1)", "ml-[3px] text-[#9a9a9a] tracking-[0.2px]", "bg-[#2a4fc0]"],
  ["体 (2)", "ml-[3px] text-[#111] tracking-[0.2px]", "bg-[#2a4fc0]"],
  ["体 (3)", "ml-[3px] text-[#9a9a9a] tracking-[0.2px]", "bg-[#2a4fc0]"],
  ["体 (4)", "ml-[3px] text-[#9a9a9a] tracking-[0.2px]", "bg-[#2a4fc0]"],
  ["体 (5)", "ml-[3px] text-[#9a9a9a] tracking-[0.2px]", "bg-[#2a4fc0]"],
  ["删除面 (6)", "ml-[3px] text-[#9a9a9a] tracking-[0.2px]", "bg-[#888]"],
  ["删除面 (7)", "ml-[3px] text-[#9a9a9a] tracking-[0.2px]", "bg-[#888]"],
  ["体 (8)", "ml-[3px] text-[#9a9a9a] tracking-[0.2px]", "bg-[#2a4fc0]"],
  ["体 (9)", "ml-[3px] text-[#9a9a9a] tracking-[0.2px]", "bg-[#2a4fc0]"],
  ["偏置区域 (10)", "ml-[3px] text-[#9a9a9a] tracking-[0.2px]", "bg-[#222]"],
  ["边倒圆 (11)", "ml-[3px] text-[#9a9a9a] tracking-[0.2px]", "bg-[#2a4fc0]"],
  ["直线 (12)", "ml-[3px] text-[#9a9a9a] tracking-[0.2px]", "bg-[#d44]"],
  ["直线 (13)", "ml-[3px] text-[#9a9a9a] tracking-[0.2px]", "bg-[#d44]"],
  ["直线 (14)", "ml-[3px] text-[#9a9a9a] tracking-[0.2px]", "bg-[#d44]"],
  ["体 (15)", "ml-[3px] text-[#9a9a9a] tracking-[0.2px]", "bg-[#2a4fc0]"],
  ["体 (17)", "ml-[3px] text-[#9a9a9a] tracking-[0.2px]", "bg-[#2a4fc0]"],
  ["体 (19)", "ml-[3px] text-[#9a9a9a] tracking-[0.2px]", "bg-[#2a4fc0]"],
  ["体 (21)", "ml-[3px] text-[#9a9a9a] tracking-[0.2px]", "bg-[#2a4fc0]"],
  ["体 (23)", "ml-[3px] text-[#9a9a9a] tracking-[0.2px]", "bg-[#2a4fc0]"],
  ["体 (25)", "ml-[3px] text-[#9a9a9a] tracking-[0.2px]", "bg-[#2a4fc0]"],
  ["体 (27)", "ml-[3px] text-[#9a9a9a] tracking-[0.2px]", "bg-[#2a4fc0]"],
  ["体 (29)", "ml-[3px] text-[#8a8a8a] font-bold tracking-[0.2px]", "bg-[#2a4fc0]"],
  ...Array.from({ length: 7 }, () => ["", "", ""] as [string, string, string]),
];

const tree = ["常规", "对象", "用户属性", "单位类型和量纲", "用户界面", "可视化", "小平面设置", "着重显示设置", "栅格", "显示", "基本光", "编辑对象显示", "线宽", "视图操作", "部件导航器", "装配导航器", "重用库", "绘图", "绘图横幅", "绘图横幅原点", "打印（仅 Windows）", "PDF 导出", "CGM 导出", "JT 文件", "转换器", "形状搜索"];

const Sel = ({ w, t, disabled }: { w: string; t: string; disabled?: boolean }) => (
  <div className={`${w} h-[25px] shrink-0 bg-white border flex items-center justify-between pl-[4px] pr-[5px] ${disabled ? "border-[#dcdcdc] text-[#aaa]" : "border-[#a8a8a8] text-[#222]"}`}>
    <span>{t}</span>
    <span className={`w-0 h-0 border-x-[4px] border-t-[4px] border-x-transparent ${disabled ? "border-t-[#bbb]" : "border-t-[#222]"}`} />
  </div>
);

const Help = () => (
  <svg viewBox="0 0 18 23" className="w-[18px] h-[23px] shrink-0">
    <path d="M1.5 1.5h15v15l1 5-5-4h-11z" fill="#fdfdb4" stroke="#1c7f9e" strokeWidth="1.2" />
    <path d="M1.5 16.5v-15h15" fill="none" stroke="#0a3fa8" strokeWidth="1.2" />
    <text x="9" y="14" fontSize="14" fontWeight="700" textAnchor="middle" fill="#12129a" fontFamily="Liberation Sans, sans-serif">?</text>
  </svg>
);

const Row = ({ label, children }: { label: string; children: React.ReactNode }) => (
  <div className="h-[25px] mb-[4px] flex items-center justify-between">
    <span className="-mt-[4px]">{label}</span>
    <div className="flex items-center gap-[2px]">
      {children}
      <Help />
    </div>
  </div>
);

const Section = ({ title, sel }: { title: string; sel?: boolean }) => (
  <div className="mx-[3px] pl-[9px] pr-[16px] pt-[1px] pb-[4px] border-b-2 border-[#d4d4d4]">
    <div className="h-[20px] mb-[5px] flex items-center text-[14px] text-[#1a7a9c]">{title}</div>
    <Row label="公差"><Sel w="w-[63px]" t="极精细" /></Row>
    <Row label="更新模式"><Sel w="w-[75px]" t="可见对象" /></Row>
    <Row label="小平面比例"><Sel w="w-[51px]" t="部件" /></Row>
    <Row label="细化因子">
      <div className="w-[82px] h-[23px] bg-white border border-[#a8a8a8] flex items-center pl-[4px]">
        {sel ? (
          <span className="bg-[#0078d7] text-white px-[1px] border-l border-[#e8742a] leading-[16px]">1.0</span>
        ) : (
          <span>1.0</span>
        )}
      </div>
    </Row>
    <div className="h-[25px] mb-[4px] flex items-center justify-between">
      <label className="flex items-center gap-[5px] -mt-[4px]">
        <span className="w-[13px] h-[13px] border border-[#333] bg-white" />
        <span>沿边对齐小平面</span>
      </label>
      <Help />
    </div>
  </div>
);

const row1: [string, string][] = [["高端渲染", "w-[85px]"], ["视图/屏幕", "w-[91px]"], ["性能", "w-[74px]"], ["手柄/点", "w-[78px]"], ["材料/纹理", "w-[91px]"], ["着重", "w-[72px]"]];
const row2: [string, string][] = [["可视", "w-[63px]"], ["小平面化", "w-[81px]"], ["颜色设置", "w-[76px]"], ["调色板", "w-[64px]"], ["背景色", "w-[64px]"], ["名称/边界", "w-[81px]"], ["直线", "w-[66px]"]];

const Model = () => {
  const origins: [number, number][] = [
    [1073, 537], [1200.7, 583.3], [1014.4, 621.7], [1141.8, 668.3],
    [1341.4, 635], [1282, 720], [1467.9, 681.7], [1409.5, 766.7],
  ];
  const bubbles: React.ReactNode[] = [];
  origins.forEach(([ox, oy], g) => {
    for (let r = 0; r < 3; r++) {
      for (let c = 0; c < 5; c++) {
        const x = ox + c * 17.2 - r * 14;
        const y = oy + c * 6.3 + r * 19;
        if (r === 1 && c === 2) {
          bubbles.push(<ellipse key={`${g}h`} cx={x + 1} cy={y + 1} rx="9.5" ry="7.5" transform={`rotate(15 ${x} ${y})`} fill="#46436b" stroke="#222233" strokeWidth="1.4" />);
          bubbles.push(<circle key={`${g}k`} cx={x - 2} cy={y + 13} r="3.4" fill="none" stroke="#222233" strokeWidth=".8" />);
        } else {
          bubbles.push(
            <ellipse key={`${g}-${r}-${c}`} cx={x} cy={y} rx="10.8" ry="9" transform={`rotate(-42 ${x} ${y})`} fill="url(#bub)" stroke="#2f2f48" strokeWidth="1.1" />,
          );
        }
      }
    }
  });
  return (
    <svg viewBox="866 203 797 736" className="w-full h-full block">
      <defs>
        <radialGradient id="bub" cx="0.6" cy="0.4" r="0.68">
          <stop offset="0" stopColor="#c6c5fb" />
          <stop offset="0.6" stopColor="#a8a5f4" />
          <stop offset="1" stopColor="#6f6cc0" />
        </radialGradient>
      </defs>
      <polygon points="866,683 1435,893 1470,903 1467,939 1435,939 866,723" fill="#433f66" />
      <polygon points="1625,693 1623,732 1470,939 1463,939 1470,903 1484,890 1613,707" fill="#55507f" />
      <polygon points="1050,480 1087,486 1591,672 1591,680 1625,693 1613,707 1487,886 1470,903 1435,893 929,698 905,680 910,663" fill="#a09bf0" stroke="#3c3a60" strokeWidth="1" />
      <path d="M1038,494 L1062,503 Q1075,505 1085,487" fill="none" stroke="#2b2b42" />
      <polyline points="912,672 932,680 942,695 930,705" fill="none" stroke="#2b2b42" />
      <polyline points="1591,672 1580,690 1590,700 1613,707" fill="none" stroke="#2b2b42" />
      <polyline points="932,702 1440,897" fill="none" stroke="#76729f" strokeWidth="2" />
      <polyline points="1610,712 1490,886" fill="none" stroke="#3c3a60" />
      {bubbles}
      <ellipse cx="1146" cy="519" rx="8" ry="6.5" fill="#46436b" stroke="#222233" strokeWidth="1.4" />
      <ellipse cx="1376" cy="848" rx="8" ry="6.5" fill="#46436b" stroke="#222233" strokeWidth="1.4" />
      <path d="M1435,887 Q1440,868 1457,865 Q1475,866 1487,880" fill="none" stroke="#3c3a60" />
      <circle cx="1462" cy="892" r="8" fill="none" stroke="#25253a" strokeWidth="1.1" />
      <path d="M1457,890h10M1457,894h10M1462,887v10" stroke="#25253a" strokeWidth=".9" />
      <line x1="1467" y1="903" x2="1463" y2="939" stroke="#3c3a60" />
      <g fontFamily="Liberation Sans, sans-serif" fontWeight="700" fill="#25253a" fontSize="10.5">
        <text transform="translate(1473 851) rotate(-60)">MS21093</text>
        <text transform="translate(1494 843) rotate(-60)" fontSize="8.5">CAV</text>
      </g>
      <g>
        <line x1="1262" y1="683" x2="1265" y2="640" stroke="#1a2fc8" strokeWidth="3" />
        <line x1="1262" y1="683" x2="1284" y2="652" stroke="#35c02f" strokeWidth="3" />
        <line x1="1262" y1="683" x2="1313" y2="703" stroke="#e61e1e" strokeWidth="3" />
        <circle cx="1264" cy="663" r="3" fill="#b07a6a" />
        <circle cx="1272" cy="668" r="3" fill="#b07a6a" />
        <circle cx="1288" cy="693" r="3.5" fill="#c08a70" />
        <g fontFamily="Liberation Sans, sans-serif" fontSize="14">
          <text x="1249" y="642" fill="#2a3fe0">ZC</text>
          <text x="1266" y="650" fill="#3aa84a">YC</text>
          <text x="1296" y="718" fill="#e0282c">XC</text>
        </g>
      </g>
      <text x="930" y="937" fill="#2a3fe0" fontSize="13" fontFamily="Liberation Sans, sans-serif">Z</text>
      <polygon points="1413,845 1452,867 1452,905 1413,925 1376,905 1376,867" fill="#6aaef0" fillOpacity="0.72" />
      <polygon points="1376,880 1413,900 1452,880 1452,905 1413,925 1376,905" fill="#1f7fc0" fillOpacity="0.65" />
      <polygon points="1400,872 1418,880 1418,903 1400,895" fill="#3a78b8" fillOpacity="0.85" />
      <text x="1461" y="895" fontSize="48" fontWeight="700" fontFamily="Liberation Sans, sans-serif" fill="#c8c8d0" fillOpacity="0.7">3D</text>
      <text x="1523" y="893" fontSize="38" fontWeight="700" fontFamily="'Noto Sans CJK SC', sans-serif" fill="#8c8c8c">世界网</text>
      <text x="1463" y="912" fontSize="12" fontWeight="700" textLength="172" lengthAdjust="spacing" fontFamily="Liberation Sans, sans-serif" fill="#a0a0a4">WWW.3DSJW.COM</text>
    </svg>
  );
};

const toolItems: [string, string][] = [
  ["s1", "w-[32px]"], ["s2", "w-[32px]"], ["s3", "w-[32px]"], ["^", "w-[8px]"], ["s4", "w-[36px]"], ["s5", "w-[32px]"], ["s6", "w-[32px]"], ["s7", "w-[36px]"], ["^", "w-[8px]"], ["s8", "w-[38px]"],
  ["s9", "w-[33px]"], ["s10", "w-[33px]"], ["s11", "w-[33px]"], ["s12", "w-[33px]"], ["s13", "w-[33px]"], ["s14", "w-[33px]"], ["s15", "w-[33px]"], ["s16", "w-[33px]"], ["s17", "w-[33px]"], ["s18", "w-[33px]"], ["s19", "w-[33px]"], ["s20", "w-[33px]"], ["s21", "w-[33px]"], ["s22", "w-[33px]"], ["s23", "w-[33px]"], ["s24", "w-[33px]"],
];
const toolItems2: [string, string][] = [
  ["t1", "w-[33px]"], ["t2", "w-[33px]"], ["t3", "w-[33px]"], ["t4", "w-[33px]"], ["t5", "w-[33px]"], ["t6", "w-[33px]"], ["^", "w-[12px]"], ["t7", "w-[32px]"], ["^", "w-[12px]"], ["t8", "w-[33px]"], ["^", "w-[12px]"], ["t9", "w-[34px]"], ["^", "w-[12px]"],
];
const Cell = ({ k, w, lg }: { k: string; w: string; lg?: boolean }) => (
  <div className={`${w} shrink-0 flex items-center justify-center`}>{k === "^" ? <Tri /> : <Ic k={k} lg={lg} />}</div>
);

export default function App() {
  return (
    <div className="relative w-[1663px] h-[939px] overflow-hidden flex flex-col bg-white text-[12px] text-[#222] font-['Noto_Sans_CJK_SC','Noto_Sans',sans-serif]">
      {/* quick access */}
      <div className="h-[26px] shrink-0 flex items-center pl-[5px] whitespace-nowrap">
        <Cell k="undo" w="w-[18px]" />
        <div className="w-px h-[20px] bg-[#dcdcdc] ml-[7px]" />
        <Cell k="scis" w="w-[26px]" /><Cell k="copy" w="w-[23px]" /><Cell k="paste" w="w-[24px]" /><Cell k="gl" w="w-[22px]" />
        <div className="w-px h-[20px] bg-[#dcdcdc] ml-[4px]" />
        <Cell k="per" w="w-[30px]" /><Cell k="^" w="w-[6px]" />
        <div className="w-px h-[20px] bg-[#dcdcdc] ml-[4px]" />
        <Cell k="pen" w="w-[28px]" />
        <div className="w-px h-[20px] bg-[#dcdcdc]" />
        <Cell k="win" w="w-[22px]" /><span className="ml-[1px] mr-[2px] w-[48px]">切换窗口</span>
        <Cell k="win2" w="w-[20px]" /><span className="ml-[1px]">窗口</span>
        <span className="ml-[3px] flex items-center gap-[3px]"><Tri /><span className="flex flex-col items-center gap-[1px]"><span className="w-[6px] h-px bg-[#222]" /><Tri /></span></span>
        <span className="ml-[614px] text-[13px]">NX 12.0.2.9 - 建模</span>
        <span className="ml-auto -mr-[4px] text-[#12708f] font-bold text-[14px]">S</span>
      </div>
      {/* tabs */}
      <div className="h-[30px] shrink-0 bg-[#d9d9d9] flex items-end pl-[102px] text-[13px] whitespace-nowrap">
        {tabs.map(([t, w], i) => (
          <div key={i} className={`${w} shrink-0 h-[30px] pb-[2px] flex items-center justify-center ${i === 0 ? "bg-white text-[#0f6f8f] border-t border-[#bdbdbd]" : "text-[#222]"}`}>{t}</div>
        ))}
        <div className="ml-auto self-center w-[88px] h-[20px] bg-white border border-[#aaa] text-[#aaa] text-[12px] pl-[2px] flex items-center shrink-0">查找命令</div>
      </div>
      {/* ribbon */}
      <div className="h-[67px] shrink-0 flex border-b border-[#d4d4d4] overflow-hidden">
        <Group w="w-[179px]" label="特征" left="text-left pl-[21px]">
          <div className="-ml-[5px] flex">
            <Col w="w-[20px]" i={["co", "burst"]} />
            <Col w="w-[30px]" i={["tp", "slice"]} />
            <Col w="w-[6px]" i={["^", ""]} />
            <Col w="w-[30px]" i={["cb", "open"]} />
            <Col w="w-[6px]" i={["^", ""]} />
            <Col w="w-[32px]" i={["cyl", "ball"]} />
            <Col w="w-[18px]" i={["boxr", "cone"]} />
            <Col w="w-[32px]" i={["cb", "stamp"]} />
            <Col w="w-[6px]" i={["", "^"]} />
          </div>
        </Group>
        <Group w="w-[97px]" pl="pl-[8px]" label="同步建模">
          <Col w="w-[25px]" i={["hx", "hx4"]} /><Col w="w-[25px]" i={["hx2", "hx5"]} /><Col w="w-[25px]" i={["hx3", "rot"]} /><Col w="w-[6px]" i={["", "^"]} />
        </Group>
        <Group w="w-[115px]" pl="pl-[10px]" label="标准化工具 - GC...">
          <Col w="w-[25px]" i={["fr", "stk"]} /><Col w="w-[25px]" i={["stk2", "note"]} /><Col w="w-[25px]" i={["bar", "tool"]} /><Col w="w-[25px]" i={["by", "chart"]} />
        </Group>
        <Group w="w-[71px]" label="齿轮建...">
          <BigCol w="w-[42px]" k="ang" /><Col w="w-[24px]" i={["roll", "line"]} />
        </Group>
        <Group w="w-[65px]" pl="pl-[9px]" label="弹簧工...">
          <Col w="w-[25px]" i={["spr", "spr2"]} /><Col w="w-[25px]" i={["ryl", "sci"]} />
        </Group>
        <Group w="w-[64px]" pl="pl-[8px]" label="加工准...">
          <Col w="w-[24px]" i={["chk", "doc"]} /><Col w="w-[36px]" i={["grd", "cs2"]} />
        </Group>
        <Group w="w-[121px]" pl="pl-[3px]" label="建模工具 - GC工具...">
          <BigCol w="w-[38px]" k="tri" /><Col w="w-[25px]" i={["tbl", "yplus"]} /><Col w="w-[25px]" i={["yc", "lines"]} /><Col w="w-[25px]" i={["brush", "h7"]} />
        </Group>
        <Group w="w-[40px]" pl="pl-[8px]" label="P...">
          <Col w="w-[25px]" i={["yb", "yb"]} />
        </Group>
        <Group w="w-[246px]" pl="pl-[8px]" label="尺寸快速格式化工具 - GC工具箱">
          <TallCol w="w-[30px]" k="dim" />
          <Col w="w-[25px]" i={["x1", "d2"]} /><Col w="w-[25px]" i={["d3", "d1"]} /><Col w="w-[25px]" i={["xp", "xb"]} /><Col w="w-[25px]" i={["h71", "h72"]} /><Col w="w-[25px]" i={["h73", "h71"]} /><Col w="w-[25px]" i={["sl", "sl2"]} /><Col w="w-[25px]" i={["dia", "dia2"]} /><Col w="w-[25px]" i={["dia2", "ret"]} />
        </Group>
        <Group w="flex-1" pl="pl-[2px]" last>
          <TallCol w="w-[34px]" k="c1" />
          <TallCol w="w-[37px]" k="c2" />
          <TallCol w="w-[34px]" k="c3" />
          <TallCol w="w-[30px]" k="c4" />
          <TallCol w="w-[28px]" k="c5" />
          <TallCol w="w-[35px]" k="c6" />
          <TallCol w="w-[37px]" k="c7" />
          <div className="w-[33px] h-[44px] shrink-0 flex items-center justify-center"><div className="w-[31px] h-[31px] bg-[#cfe6ee] border border-[#a6d0de] flex items-center justify-center"><Tall k="c8" /></div></div>
          <TallCol w="w-[32px]" k="c9" />
          <TallCol w="w-[36px]" k="q1" />
          <Col w="w-[7px]" i={["^", ""]} />
          <TallCol w="w-[36px]" k="q2" />
          <TallCol w="w-[33px]" k="q3" />
          <TallCol w="w-[32px]" k="q4" />
          <Col w="w-[25px]" i={["book", "g1"]} /><Col w="w-[25px]" i={["y1", "g2"]} /><Col w="w-[25px]" i={["f1", "g3"]} /><Col w="w-[25px]" i={["f2", "g4"]} /><Col w="w-[25px]" i={["f3", "g5"]} /><Col w="w-[25px]" i={["f4", "g6"]} /><Col w="w-[25px]" i={["f5", "g7"]} /><Col w="w-[25px]" i={["f6", "g8"]} /><Col w="w-[25px]" i={["f7", "g9"]} />
        </Group>
      </div>
      {/* selection toolbar */}
      <div className="h-[35px] shrink-0 flex items-center border-b-[2px] border-[#a0a0a0] whitespace-nowrap">
        <div className="w-[111px] h-[26px] shrink-0 flex items-center pl-[26px] border-r border-[#d4d4d4]">
          <span className="w-[24px] h-[24px] shrink-0"><Ic k="menu" lg /></span>
          <span className="ml-[4px] text-[13px]">菜单(<span className="underline">M</span>)</span>
          <span className="ml-[3px]"><Tri /></span>
        </div>
        <div className="ml-[12px] w-[133px] h-[20px] shrink-0 border border-[#aaa] text-[#aaa] flex items-center justify-between pl-[2px] pr-[5px]"><span>无选择过滤器</span><span className="w-0 h-0 border-x-[4px] border-t-[4px] border-x-transparent border-t-[#aaa]" /></div>
        <div className="ml-[8px] w-[140px] h-[20px] shrink-0 border border-[#aaa] text-[#aaa] flex items-center justify-between pl-[2px] pr-[5px]"><span>整个装配</span><span className="w-0 h-0 border-x-[4px] border-t-[4px] border-x-transparent border-t-[#aaa]" /></div>
        <div className="ml-[5px] flex items-center">
          {toolItems.map(([k, w], i) => <Cell key={i} k={k} w={w} lg />)}
          <div className="w-[50px] shrink-0 text-center text-[11px]">简单干涉</div>
          <Cell k="s25" w="w-[36px]" lg />
          <div className="ml-[7px] mr-[5px] w-px h-[26px] bg-[#d4d4d4]" />
          {toolItems2.map(([k, w], i) => <Cell key={i} k={k} w={w} lg />)}
        </div>
      </div>
      {/* main */}
      <div className="flex-1 min-h-0 flex">
        <div className="w-[863px] shrink-0 flex flex-col overflow-hidden">
          <div className="h-[50px] shrink-0 w-[853px]">
            <div className="-ml-[12px] mt-[1px] text-[13px] leading-[16px] font-medium">默认值</div>
            <div className="ml-[836px] mt-[14px] w-[11px] h-[11px] border border-[#111] border-t-[3px]" />
          </div>
          <div className="w-[853px] h-[22px] shrink-0 flex bg-[#f0f0f0] border-y border-[#d8d8d8]">
            <div className="w-[313px] bg-[#afd5e0]" />
            <div className="w-[100px] border-r border-[#dcdcdc] pl-[7px] flex items-center">最新</div>
            <div className="w-[101px] border-r border-[#dcdcdc] pl-[5px] flex items-center">附注</div>
          </div>
          <div className="w-[853px] flex-1 min-h-0 overflow-hidden">
            {leftRows.map(([t, cls, ic], i) => (
              <div key={i} className={`h-[20px] flex border-b border-[#e8e8e8] ${i % 2 ? "bg-[#f9f9f9]" : "bg-white"}`}>
                <div className="w-[313px] shrink-0 border-r border-[#e8e8e8] flex items-center overflow-hidden whitespace-nowrap">
                  {ic ? <span className={`w-[2px] h-[5px] mt-[6px] shrink-0 ${ic}`} /> : null}
                  <span className={cls}>{t}</span>
                </div>
                <div className="w-[100px] shrink-0 border-r border-[#e8e8e8]" />
                <div className="w-[101px] shrink-0 border-r border-[#e8e8e8]" />
              </div>
            ))}
          </div>
        </div>
        <div className="flex-1 min-w-0 flex flex-col">
          <div className="h-[21px] shrink-0" />
          <div className="h-[21px] shrink-0 w-[180px] bg-[#579fb9] flex items-center text-white pl-[7px] text-[13px] whitespace-nowrap">
            <span className="w-[15px] h-[15px] shrink-0"><Ic k="s9" /></span>
            <span className="ml-[5px] opacity-90">MS21093-CAV-T.prt</span>
            <span className="ml-[7px] w-[8px] h-[10px] border border-white bg-[#579fb9]" />
            <span className="ml-[7px] text-[#c8dce4] font-bold leading-none">×</span>
          </div>
          <div className="h-[2px] shrink-0 bg-[#579fb9]" />
          <div className="flex-1 min-h-0 border-l-[3px] border-[#d2a06c] bg-[#232428] overflow-hidden">
            <Model />
          </div>
        </div>
      </div>

      {/* dialog */}
      <div className="absolute left-[142px] top-[236px] w-[762px] h-[652px] bg-[#f0f0f0] border border-[#cfcfcf] border-t-0 flex flex-col">
        <div className="h-[24px] shrink-0 bg-[#569fb9] flex items-center text-white text-[14px] pl-[7px] pr-[10px] -mx-px">
          <svg viewBox="0 0 20 20" className="w-[15px] h-[15px]"><g fill="none" stroke="#fff"><circle cx="10" cy="10" r="5" strokeWidth="3.2" /><circle cx="10" cy="10" r="7.6" strokeWidth="2.6" strokeDasharray="3 3" /></g></svg>
          <span className="ml-[7px] opacity-95">用户默认设置</span>
          <svg viewBox="0 0 12 12" className="ml-auto w-[12px] h-[12px]"><path d="M1 1l10 10M11 1L1 11" stroke="#fff" strokeWidth="2" /></svg>
        </div>
        <div className="mt-[8px] h-[32px] shrink-0 flex items-start justify-end pr-[9px] whitespace-nowrap">
          <span className="h-[25px] flex items-center mr-[6px]">默认设置级别</span>
          <Sel w="w-[115px]" t="用户" />
          <span className="h-[25px] flex items-center ml-[3px] mr-[5px] text-[#aaa]">默认的锁定状态</span>
          <Sel w="w-[62px]" t="解锁" disabled />
          <span className="h-[25px] flex items-center ml-[3px] mr-[5px]">单位制</span>
          <Sel w="w-[50px]" t="公制" />
          <button className="ml-[3px] w-[32px] h-[32px] border border-[#a8a8a8] flex items-center justify-center bg-[#f0f0f0]">
            <svg viewBox="0 0 24 24" className="w-[24px] h-[24px]"><circle cx="7" cy="11" r="5" fill="#3a3a3a" /><circle cx="17" cy="11" r="5" fill="#3a3a3a" /><circle cx="7" cy="12" r="3" fill="#5566cc" /><circle cx="17" cy="12" r="3" fill="#5566cc" /><rect x="9" y="6" width="6" height="5" fill="#666" /></svg>
          </button>
          <button className="ml-[2px] w-[32px] h-[32px] border border-[#a8a8a8] flex items-center justify-center bg-[#f0f0f0]">
            <svg viewBox="0 0 24 24" className="w-[24px] h-[24px]"><path d="M2 15c5-6 11-6 15 0-4 4-11 4-15 0z" fill="#4f6a52" stroke="#222" /><circle cx="10" cy="14" r="2.5" fill="#36b24a" /><path d="M10 13L20 5" stroke="#1a3fc0" strokeWidth="2" /><polygon points="22,2 16,4 20,8" fill="#1a3fc0" /></svg>
          </button>
        </div>
        <div className="mt-[2px] flex pl-[9px]">
          <div className="w-[250px] h-[537px] shrink-0 border border-[#d0d0d0] bg-white flex">
            <div className="w-[231px] shrink-0 overflow-hidden">
              <div className="h-[20px] border-b border-[#e8e8e8] pl-[4px] flex items-center">基本环境</div>
              {tree.map((t, i) => (
                <div key={i} className={`h-[20px] border-b border-[#e8e8e8] flex items-stretch ${i % 2 ? "bg-[#f9f9f9]" : "bg-white"}`}>
                  <span className="ml-[10px] w-[9px] shrink-0 border-l border-dotted border-[#888] flex items-center"><span className="w-full border-t border-dotted border-[#888]" /></span>
                  <span className={`flex-1 pl-[3px] flex items-center whitespace-nowrap ${t === "可视化" ? "bg-[#8bc1d0]" : ""}`}>{t}</span>
                </div>
              ))}
            </div>
            <div className="w-[16px] shrink-0 bg-[#f0f0f0] flex flex-col">
              <div className="h-[18px] shrink-0 flex items-center justify-center"><svg viewBox="0 0 10 8" className="w-[8px] h-[6px]"><path d="M1 7l4-5 4 5" fill="none" stroke="#555" strokeWidth="2" /></svg></div>
              <div className="h-[183px] shrink-0 bg-[#c8c8c8]" />
              <div className="flex-1" />
              <div className="h-[18px] shrink-0 flex items-center justify-center"><svg viewBox="0 0 10 8" className="w-[8px] h-[6px]"><path d="M1 1l4 5 4-5" fill="none" stroke="#555" strokeWidth="2" /></svg></div>
            </div>
          </div>
          <div className="ml-[2px] w-[490px] shrink-0 flex flex-col pt-[2px]">
            <div className="h-[28px] flex pl-[2px]">
              {row1.map(([t, w]) => <div key={t} className={`${w} shrink-0 border border-[#d0d0d0] -mr-px flex items-center justify-center`}>{t}</div>)}
            </div>
            <div className="h-[28px] flex pl-[2px] relative z-10">
              {row2.map(([t, w]) => (
                <div key={t} className={`${w} shrink-0 -mr-px flex items-center justify-center border border-[#d0d0d0] ${t === "小平面化" ? "h-[32px] -mt-[2px] bg-white border-b-0 relative z-10" : ""}`}>{t}</div>
              ))}
            </div>
            <div className="h-[479px] shrink-0 border border-[#bdbdbd] bg-[#fbfbfb] pt-[4px] pb-[6px] px-[6px]">
              <div className="h-full bg-white border border-[#dcdcdc]">
                <Section title="着色视图" sel />
                <Section title="高级可视化视图" />
              </div>
            </div>
          </div>
        </div>
        <div className="mt-[13px] flex justify-end gap-[5px] pr-[15px]">
          <button className="w-[54px] h-[25px] border border-[#aaa] text-[#aaa]">确定</button>
          <button className="w-[54px] h-[25px] border border-[#aaa] text-[#aaa]">应用</button>
          <button className="w-[54px] h-[25px] border border-[#aaa] bg-[#d9d9d9]">取消</button>
        </div>
      </div>
    </div>
  );
}
